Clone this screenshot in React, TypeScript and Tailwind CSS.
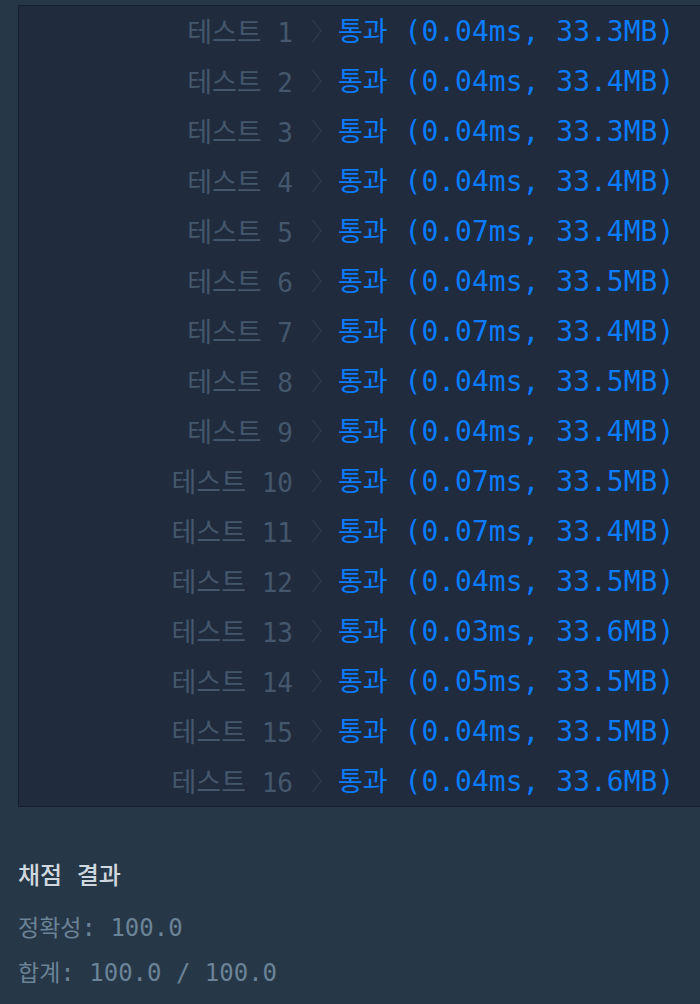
const results = [
  { no: 1, time: "0.04", mem: "33.3" },
  { no: 2, time: "0.04", mem: "33.4" },
  { no: 3, time: "0.04", mem: "33.3" },
  { no: 4, time: "0.04", mem: "33.4" },
  { no: 5, time: "0.07", mem: "33.4" },
  { no: 6, time: "0.04", mem: "33.5" },
  { no: 7, time: "0.07", mem: "33.4" },
  { no: 8, time: "0.04", mem: "33.5" },
  { no: 9, time: "0.04", mem: "33.4" },
  { no: 10, time: "0.07", mem: "33.5" },
  { no: 11, time: "0.07", mem: "33.4" },
  { no: 12, time: "0.04", mem: "33.5" },
  { no: 13, time: "0.03", mem: "33.6" },
  { no: 14, time: "0.05", mem: "33.5" },
  { no: 15, time: "0.04", mem: "33.5" },
  { no: 16, time: "0.04", mem: "33.6" },
]

function Chevron() {
  return (
    <svg width="12" height="24" viewBox="0 0 12 24" className="shrink-0">
      <path d="M1.5 1 L10 12 L1.5 23" fill="none" stroke="#2d3a4c" strokeWidth="1.4" />
    </svg>
  )
}

function App() {
  return (
    <div className="min-h-screen w-[700px] overflow-hidden bg-[#263747] pt-[5px] font-['DejaVu_Sans_Mono','Noto_Sans_CJK_KR',monospace]">

      {/* RESULT TABLE */}
      <div className="ml-[18px] w-[720px] border border-[#172030] bg-[#202b3d]">
        {results.map((r) => (
          <div key={r.no} className="flex h-[50px] items-center leading-none">
            <div className="w-[274px] shrink-0 text-right text-[26px] text-[#44576c]">
              <span className="font-['Noto_Sans_CJK_KR',sans-serif] text-[27px]">테스트</span> {r.no}
            </div>
            <div className="ml-[18px] mr-[15px] flex items-center">
              <Chevron />
            </div>
            <div className="whitespace-pre text-[28px] text-[#0a7cff]">
              <span className="font-['Noto_Sans_CJK_KR',sans-serif] text-[27px]">통과</span> ({r.time}ms, {r.mem}MB)
            </div>
          </div>
        ))}
      </div>

      {/* SUMMARY */}
      <div className="px-[18px] pt-[55px]">
        <h2 className="text-[24px] font-medium leading-none text-[#d0d8df]">
          <span className="font-['Noto_Sans_CJK_KR',sans-serif]">채점</span> <span className="font-['Noto_Sans_CJK_KR',sans-serif]">결과</span>
        </h2>
        <p className="mt-[27px] text-[24px] leading-none text-[#6b8396]">
          <span className="font-['Noto_Sans_CJK_KR',sans-serif] text-[23px]">정확성</span>: 100.0
        </p>
        <p className="mt-[20px] text-[24px] leading-none text-[#6b8396]">
          <span className="font-['Noto_Sans_CJK_KR',sans-serif] text-[23px]">합계</span>: 100.0 / 100.0
        </p>
      </div>

    </div>
  )
}

export default App
